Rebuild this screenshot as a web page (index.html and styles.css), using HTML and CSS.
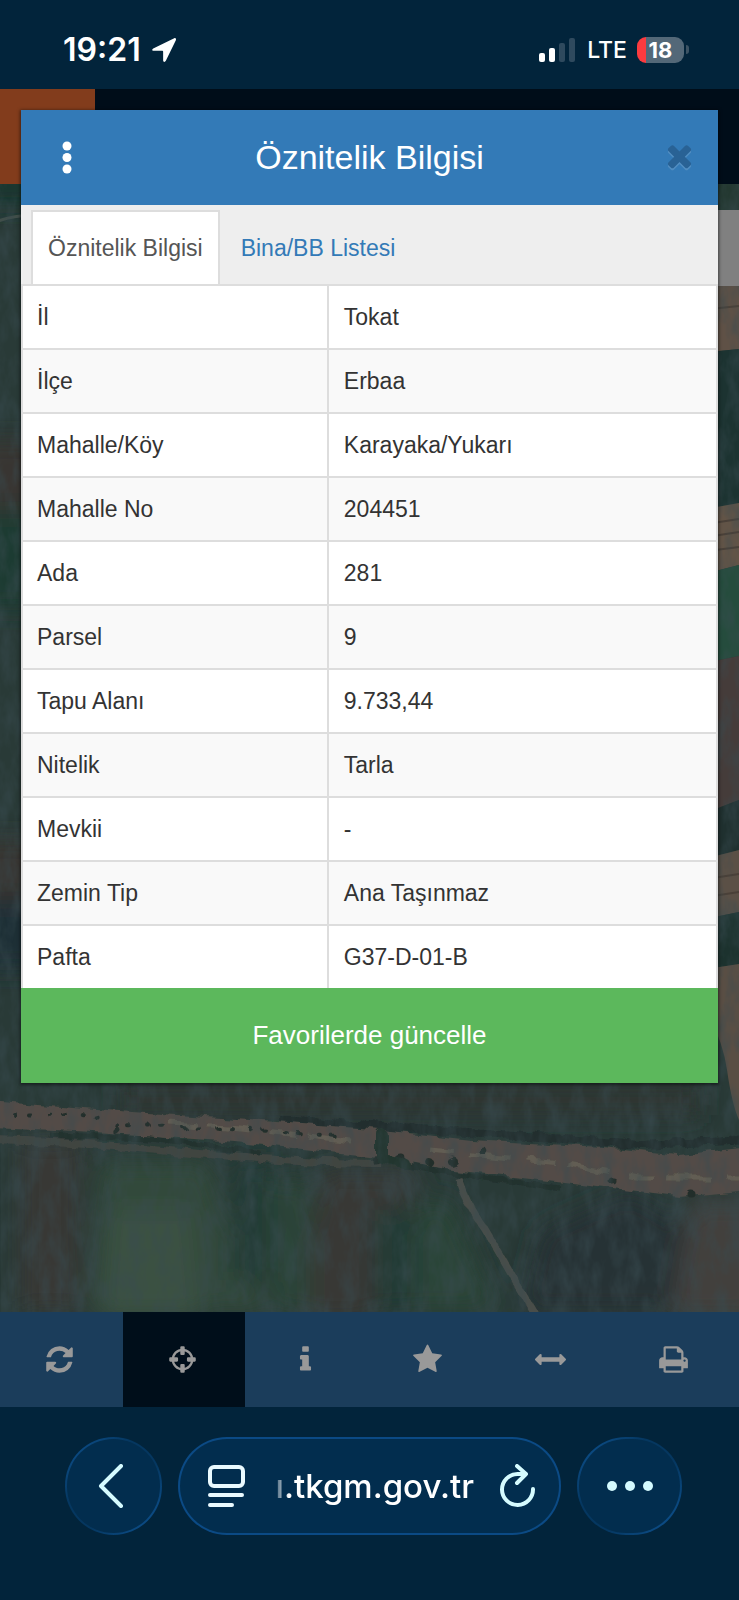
FILE: index.html
```html
<!DOCTYPE html>
<html lang="tr">
<head>
    <meta charset="UTF-8">
    <meta name="viewport" content="width=device-width, initial-scale=1.0">
    <title>Öznitelik Bilgisi</title>
    <link rel="stylesheet" href="styles.css">
</head>
<body>
    <div class="status-bar">
        <div class="status-left">
            <span class="clock">19:21</span>
            <svg class="location" viewBox="0 0 26 26"><path d="M22.500 2 3 11.500C1.500 12.300 1.900 13.800 3.500 13.800H11.500c.5 0 .7.3.7.8V22.500c0 1.800 1.700 2.100 2.500.5L24 4C24.600 2.500 23.800 1.500 22.500 2z"/></svg>
        </div>
        <div class="status-right">
            <svg class="signal" viewBox="0 0 38 24">
                <rect x="0" y="15" width="6" height="9" rx="2"/>
                <rect x="10" y="10" width="6" height="14" rx="2"/>
                <rect class="off" x="20" y="5" width="6" height="19" rx="2"/>
                <rect class="off" x="30" y="0" width="6" height="24" rx="2"/>
            </svg>
            <span class="network">LTE</span>
            <span class="battery">18</span>
            <span class="battery-cap"></span>
        </div>
    </div>

    <main class="app">
        <header class="site-header"><div class="site-logo"></div></header>

        <div class="map">
            <svg class="map-image" viewBox="0 184 739 1128" preserveAspectRatio="xMidYMid slice" aria-hidden="true">
                <defs>
                    <filter id="grain" x="0" y="0" width="100%" height="100%">
                        <feTurbulence type="fractalNoise" baseFrequency=".07 .03" numOctaves="4" seed="7"/>
                        <feColorMatrix values="0 0 0 0 .04  0 0 0 0 .07  0 0 0 0 .08  1.200 0 0 0 -.45"/>
                    </filter>
                    <filter id="rough" x="-5%" y="-5%" width="110%" height="110%">
                        <feTurbulence type="fractalNoise" baseFrequency=".06" numOctaves="3" seed="3"/>
                        <feDisplacementMap in="SourceGraphic" scale="9"/>
                        <feGaussianBlur stdDeviation=".7"/>
                    </filter>
                    <filter id="soft" x="-30%" y="-30%" width="160%" height="160%">
                        <feGaussianBlur stdDeviation="12"/>
                    </filter>
                </defs>
                <rect x="0" y="184" width="739" height="1128" fill="#293a37"/>
                <!-- fields -->
                <g filter="url(#soft)">
                    <path fill="#17362f" d="M-20 170H40V205H-20z"/>
                    <path fill="#383633" d="M-20 440H40V510H-20zM-20 840H40V900H-20z"/>
                    <path fill="#1f3a33" d="M-20 510H40V610H-20z"/>
                    <path fill="#1b2f34" d="M-20 900H40V970H-20z"/>
                    <path fill="#383835" d="M20 1140H80V1312H20zM320 1170H420L370 1320H300z"/>
                    <path fill="#30483a" d="M100 1160H210L230 1230 270 1312H90z"/>
                    <path fill="#3a5142" d="M110 1210H190L200 1320H100z"/>
                    <path fill="#2c4438" d="M270 1180H310V1312H270zM420 1200H450L500 1312H405z"/>
                    <path fill="#243a35" d="M235 1160H270V1280H230zM375 1210H415V1312H375z"/>
                    <path fill="#253334" d="M540 1230 630 1190 710 1240 680 1312H520z"/>
                    <path fill="#42413c" d="M690 1200H760V1320H670z"/>
                    <path fill="#2f3432" d="M120 1085H700V1115H120z"/>
                </g>
                <path fill="none" stroke="#48544f" stroke-width="3" d="M-5 222Q12 216 30 215" opacity=".8"/>
                <!-- strips on the right edge -->
                <path fill="#22372f" d="M700 184H739V286H700z"/>
                <path fill="#5f5146" d="M700 286H739V349L700 353z"/>
                <path fill="#1c3331" d="M700 353 739 349V503L700 510z"/>
                <path fill="#625447" d="M700 510 739 503V565L700 575z"/>
                <path fill="#254c3d" d="M700 575 739 565V656L700 664z"/>
                <path fill="#453c3a" d="M700 664 739 656V800L700 815z"/>
                <path fill="#1f302f" d="M700 815 739 800V850L700 860z"/>
                <path fill="#5b5046" d="M700 860 739 850V912L700 920z"/>
                <path fill="#1c322e" d="M700 920 739 912V964L700 970z"/>
                <path fill="#594e44" d="M700 970 739 964V1120Q732 1105 727 1070T700 1000z"/>
                <path stroke="#4a4038" stroke-width="2" d="M700 525 739 519M700 538 739 532M700 552 739 547M700 310 739 306M700 880 739 874M700 898 739 892"/>
                <!-- track and dry stream bed -->
                <g filter="url(#rough)">
                    <path fill="none" stroke="#414440" stroke-width="8" d="M-10 1140Q90 1142 180 1152T380 1163"/>
                    <path fill="none" stroke="#202e2e" stroke-width="8" d="M280 1120 400 1128 500 1134 640 1145 750 1140"/>
                    <path fill="#524c46" d="M-10 1100 132 1112 236 1119 372 1129 471 1140 603 1147 679 1155 750 1147V1190L679 1197 565 1183 452 1170 377 1157 236 1142 94 1132-10 1127z"/>
                    <path fill="none" stroke="#625d53" stroke-width="5" stroke-dasharray="26 12 44 18" d="M170 1123 240 1128 360 1142M430 1150 560 1163 640 1178 739 1178"/>
                    <path fill="none" stroke="#22312e" stroke-width="5" d="M50 1135 150 1138 260 1153M400 1164 470 1176 560 1188"/>
                    <path fill="none" stroke="#4a4d48" stroke-width="7" d="M457 1177Q466 1205 484 1228L537 1318"/>
                </g>
                <!-- bushes -->
                <g fill="none" stroke="#222d29" stroke-linecap="round" stroke-width="4" filter="url(#rough)">
                    <path stroke-dasharray="1 12 2 19" d="M15 1115 70 1113 100 1118 120 1126 230 1128 350 1137"/>
                    <path stroke-width="7" stroke-dasharray="1 22 3 30" d="M115 1130 120 1126M375 1160 410 1156 440 1166 490 1149M612 1181H613M692 1195H694"/>
                    <path stroke-width="10" stroke="#22362f" d="M382 1134V1158L404 1163"/>
                </g>
                <rect x="0" y="184" width="739" height="1128" filter="url(#grain)"/>
            </svg>
            <div class="map-control"></div>
        </div>

        <nav class="toolbar" aria-label="Harita araçları">
            <button class="tool" aria-label="Yenile"><svg viewBox="0 0 1792 1792"><path d="M1639 1056q0 5-1 7-64 268-268 434.500t-478 166.500q-146 0-282.500-55t-243.500-157l-129 129q-19 19-45 19t-45-19-19-45v-448q0-26 19-45t45-19h448q26 0 45 19t19 45-19 45l-137 137q71 66 161 102t187 36q134 0 250-65t186-179q11-17 53-117 8-23 30-23h192q13 0 22.500 9.500t9.500 22.500zm25-800v448q0 26-19 45t-45 19h-448q-26 0-45-19t-19-45 19-45l138-138q-148-137-349-137-134 0-250 65t-186 179q-11 17-53 117-8 23-30 23h-199q-13 0-22.500-9.500t-9.500-22.500v-7q65-268 270-434.500t480-166.500q146 0 284 55.500t245 156.500l130-129q19-19 45-19t45 19 19 45z"/></svg></button>
            <button class="tool active" aria-label="Konum"><svg viewBox="0 0 1792 1792"><circle cx="896" cy="896" r="560" fill="none" stroke="currentColor" stroke-width="130"/><path d="M832 128h128q64 0 64 64v384q0 64-64 64h-128q-64 0-64-64v-384q0-64 64-64zM832 1152h128q64 0 64 64v384q0 64-64 64h-128q-64 0-64-64v-384q0-64 64-64zM192 768h384q64 0 64 64v128q0 64-64 64h-384q-64 0-64-64v-128q0-64 64-64zM1216 768h384q64 0 64 64v128q0 64-64 64h-384q-64 0-64-64v-128q0-64 64-64z"/></svg></button>
            <button class="tool" aria-label="Bilgi"><svg viewBox="0 0 1792 1792"><path d="M1216 1344v128q0 26-19 45t-45 19h-512q-26 0-45-19t-19-45v-128q0-26 19-45t45-19h64v-384h-64q-26 0-45-19t-19-45v-128q0-26 19-45t45-19h384q26 0 45 19t19 45v576h64q26 0 45 19t19 45zm-128-1152v192q0 26-19 45t-45 19h-256q-26 0-45-19t-19-45v-192q0-26 19-45t45-19h256q26 0 45 19t19 45z"/></svg></button>
            <button class="tool" aria-label="Favoriler"><svg viewBox="0 0 1792 1792"><path d="M1728 647q0 22-26 48l-363 354 86 500q1 7 1 20 0 21-10.500 35.500t-30.500 14.500q-19 0-40-12l-449-236-449 236q-22 12-40 12-21 0-31.500-14.500t-10.500-35.500q0-6 2-20l86-500-364-354q-25-27-25-48 0-37 56-46l502-73 225-455q19-41 49-41t49 41l225 455 502 73q56 9 56 46z"/></svg></button>
            <button class="tool" aria-label="Ölçüm"><svg viewBox="0 0 1792 1792"><path d="M1792 896q0 26-19 45l-256 256q-19 19-45 19t-45-19-19-45v-128h-1024v128q0 26-19 45t-45 19-45-19l-256-256q-19-19-19-45t19-45l256-256q19-19 45-19t45 19 19 45v128h1024v-128q0-26 19-45t45-19 45 19l256 256q19 19 19 45z"/></svg></button>
            <button class="tool" aria-label="Yazdır"><svg viewBox="0 0 1792 1792"><path d="M448 1536h896v-256h-896v256zm0-640h896v-384h-160q-40 0-68-28t-28-68v-160h-640v640zm1152 64q0-26-19-45t-45-19-45 19-19 45 19 45 45 19 45-19 19-45zm128 0v416q0 13-9.500 22.500t-22.500 9.500h-224v160q0 40-28 68t-68 28h-960q-40 0-68-28t-28-68v-160h-224q-13 0-22.500-9.500t-9.500-22.500v-416q0-79 56.500-135.500t135.500-56.500h64v-544q0-40 28-68t68-28h672q40 0 88 20t76 48l152 152q28 28 48 76t20 88v256h64q79 0 135.500 56.500t56.500 135.500z"/></svg></button>
        </nav>

        <section class="modal" role="dialog" aria-labelledby="modal-title">
            <div class="modal-header">
                <button class="modal-menu" aria-label="Menü"><svg viewBox="0 0 10 34"><circle cx="5" cy="5" r="4.500"/><circle cx="5" cy="16.500" r="4.500"/><circle cx="5" cy="28" r="4.500"/></svg></button>
                <h1 id="modal-title">Öznitelik Bilgisi</h1>
                <button class="modal-close" aria-label="Kapat"><svg viewBox="0 0 1792 1792"><path d="M1490 1322q0 40-28 68l-136 136q-28 28-68 28t-68-28l-294-294-294 294q-28 28-68 28t-68-28l-136-136q-28-28-28-68t28-68l294-294-294-294q-28-28-28-68t28-68l136-136q28-28 68-28t68 28l294 294 294-294q28-28 68-28t68 28l136 136q28 28 28 68t-28 68l-294 294 294 294q28 28 28 68z"/></svg></button>
            </div>
            <div class="tabs">
                <a href="#oznitelik" class="tab selected">Öznitelik Bilgisi</a>
                <a href="#bina" class="tab">Bina/BB Listesi</a>
            </div>
            <table class="attributes" id="oznitelik">
                <tbody>
                    <tr><th scope="row">İl</th><td>Tokat</td></tr>
                    <tr><th scope="row">İlçe</th><td>Erbaa</td></tr>
                    <tr><th scope="row">Mahalle/Köy</th><td>Karayaka/Yukarı</td></tr>
                    <tr><th scope="row">Mahalle No</th><td>204451</td></tr>
                    <tr><th scope="row">Ada</th><td>281</td></tr>
                    <tr><th scope="row">Parsel</th><td>9</td></tr>
                    <tr><th scope="row">Tapu Alanı</th><td>9.733,44</td></tr>
                    <tr><th scope="row">Nitelik</th><td>Tarla</td></tr>
                    <tr><th scope="row">Mevkii</th><td>-</td></tr>
                    <tr><th scope="row">Zemin Tip</th><td>Ana Taşınmaz</td></tr>
                    <tr><th scope="row">Pafta</th><td>G37-D-01-B</td></tr>
                </tbody>
            </table>
            <button class="favorite">Favorilerde güncelle</button>
        </section>
    </main>

    <footer class="browser-bar">
        <button class="glass back" aria-label="Geri"><svg viewBox="0 0 26 44"><path d="M23 2 3 22 23 42"/></svg></button>
        <div class="glass address">
            <button class="page-menu" aria-label="Sayfa menüsü"><svg viewBox="0 0 38 44"><rect x="3" y="3" width="33" height="19" rx="4"/><path d="M3 31H35M3 41H25"/></svg></button>
            <input class="url" type="text" value="ı.tkgm.gov.tr" aria-label="Adres">
            <button class="reload" aria-label="Yeniden yükle"><svg viewBox="0 0 36 44"><path d="M33 25A15.500 15.500 0 1 1 17.500 10H26M17 2 26 10 17 19"/></svg></button>
        </div>
        <button class="glass more" aria-label="Diğer"><svg viewBox="0 0 48 10"><circle cx="6" cy="5" r="5"/><circle cx="24" cy="5" r="5"/><circle cx="42" cy="5" r="5"/></svg></button>
    </footer>
</body>
</html>
```
FILE: styles.css
```css
* { box-sizing: border-box; }
body { margin: 0; min-height: 100vh; display: flex; flex-direction: column; background: #02243b; color: #333; font-family: "Liberation Sans", Arial, sans-serif; }
button { padding: 0; border: 0; background: none; color: inherit; font-family: inherit; cursor: pointer; }
svg { display: block; fill: currentColor; }

/* phone status bar */
.status-bar { display: flex; justify-content: space-between; align-items: center; height: 89px; padding: 10px 50px 0 63px; color: #fff; font-family: Inter, sans-serif; }
.status-left, .status-right { display: flex; align-items: center; }
.status-left { gap: 9px; }
.clock { font-size: 32px; font-weight: 600; }
.location { width: 28px; height: 28px; }
.signal { width: 38px; height: 24px; }
.signal .off { fill: #2f4a5e; }
.network { margin: 0 10px; font-size: 23px; font-weight: 500; }
.battery { width: 47px; height: 26px; border-radius: 9px; background: linear-gradient(90deg, #fc3b3f 9px, #536878 9px); font-size: 22px; font-weight: 700; line-height: 26px; text-align: center; }
.battery-cap { width: 3px; height: 9px; margin-left: 2px; border-radius: 0 3px 3px 0; background: #3c5364; }

/* page under the dialog */
.app { position: relative; flex: 1; display: flex; flex-direction: column; }
.site-header { height: 95px; background: #000d19; }
.site-logo { width: 95px; height: 95px; background: #823c1c; }
.map { position: relative; flex: 1; min-height: 920px; overflow: hidden; background: #263633; }
.map-image { position: absolute; inset: 0; width: 100%; height: 100%; }
.map-control { position: absolute; top: 26px; right: 0; width: 76px; height: 76px; background: #808080; }
.toolbar { display: flex; padding-right: 3px; background: #1b3d5b; }
.tool { flex: 1; display: flex; justify-content: center; align-items: center; height: 95px; padding-right: 3px; color: #999; }
.tool.active { background: #000e1a; }
.tool svg { width: 31px; height: 31px; }

/* dialog */
.modal { position: absolute; top: 21px; left: 21px; right: 21px; background: #fff; box-shadow: 0 1px 3px 1px rgba(0, 0, 0, .5); }
.modal-header { display: grid; grid-template-columns: 92px 1fr 92px; align-items: center; justify-items: center; height: 95px; background: #337ab7; color: #fff; }
.modal-header h1 { margin: 0; font-size: 34px; font-weight: normal; }
.modal-menu svg { width: 10px; height: 34px; }
.modal-close { padding: 0 0 4px 15px; color: #296295; }
.modal-close svg { width: 35px; height: 35px; filter: drop-shadow(0 2px 0 rgba(255, 255, 255, .15)); }
.tabs { display: flex; gap: 4px; padding: 5px 10px 0; background: #eee; border-bottom: 2px solid #ddd; }
.tab { padding: 21px 15px; border: 2px solid transparent; border-bottom: 0; color: #337ab7; font-size: 23px; line-height: 30px; text-decoration: none; }
.tab.selected { background: #fff; border-color: #ddd; color: #555; }
.attributes { width: 100%; border-collapse: collapse; font-size: 23px; line-height: 30px; }
.attributes th, .attributes td { padding: 16px 14px; border: 2px solid #ddd; border-top: 0; font-weight: normal; text-align: left; }
.attributes th { width: 44%; }
.attributes td { padding-left: 15px; }
.attributes tr:nth-child(even) { background: #f9f9f9; }
.attributes tr:last-child > * { border-bottom: 0; }
.favorite { display: block; width: 100%; height: 95px; background: #5cb85c; color: #fff; font-size: 26px; }

/* browser controls */
.browser-bar { display: flex; gap: 16px; padding: 30px 57px 65px 65px; color: #d5fbff; }
.glass { display: flex; align-items: center; justify-content: center; height: 98px; border: 2px solid transparent; border-radius: 50px; background: linear-gradient(#022d4e, #022d4e) padding-box, linear-gradient(135deg, #0f5596, #053760 35%, #053760 60%, #0f5596) border-box; }
.back { width: 97px; }
.back svg { width: 26px; height: 44px; margin-right: 6px; }
.back path, .reload path, .page-menu rect, .page-menu path { fill: none; stroke: currentColor; stroke-width: 4; stroke-linecap: round; stroke-linejoin: round; }
.address { flex: 1; min-width: 0; justify-content: space-between; padding: 0 23px 0 27px; background: linear-gradient(#022d4e, #022d4e) padding-box, #0b4a85 border-box; }
.page-menu { color: #eafaff; }
.page-menu svg { width: 38px; height: 44px; }
.url { flex: 1; min-width: 0; margin: 0 26px 0 26px; padding: 0; border: 0; outline: 0; background: none; color: #fff; font-family: Inter, sans-serif; font-size: 33px; font-weight: 500; text-align: right; -webkit-mask-image: linear-gradient(90deg, transparent, #000 18px); mask-image: linear-gradient(90deg, transparent, #000 18px); }
.reload svg { width: 36px; height: 44px; }
.more { width: 105px; }
.more svg { width: 48px; height: 10px; }
```
